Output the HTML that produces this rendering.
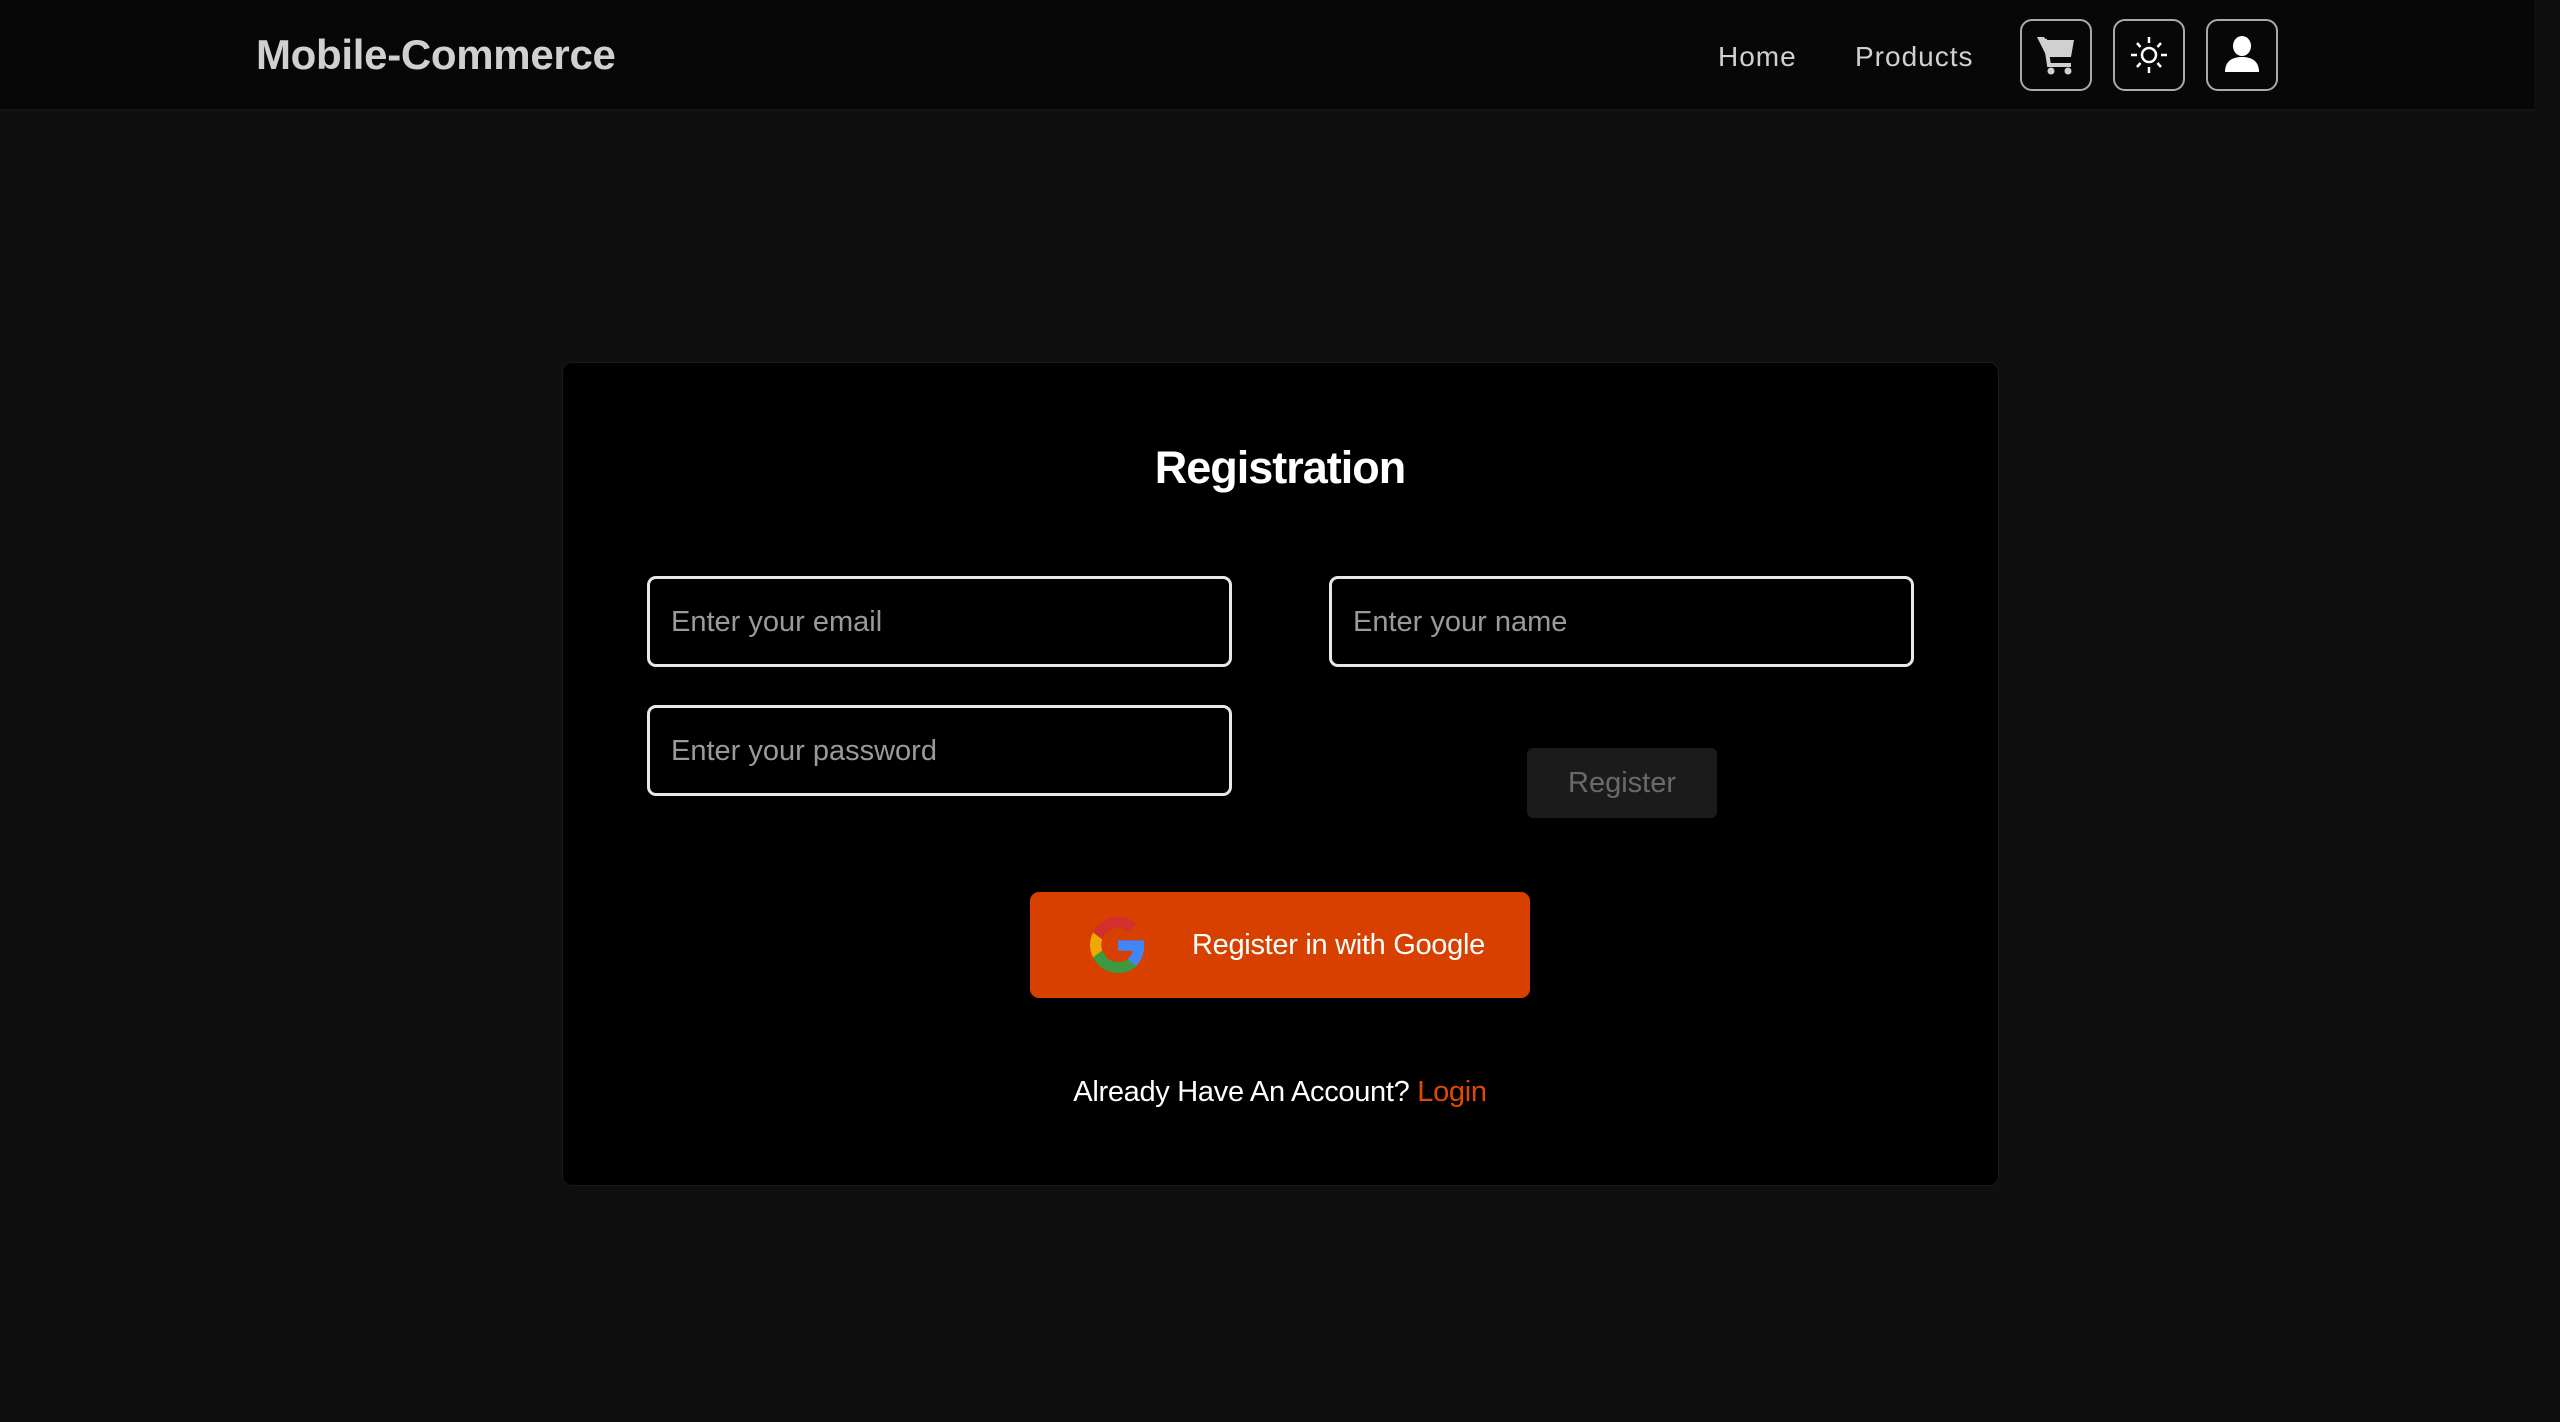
<!DOCTYPE html>
<html><head><style>
*{box-sizing:border-box;margin:0;padding:0}
body{width:2560px;height:1422px;background:#0f0f0f;font-family:"Liberation Sans",sans-serif;position:relative;overflow:hidden}
.nav{position:absolute;left:0;top:0;width:2534px;height:111px;background:#070707;border-bottom:2px solid #151515}
.logo{position:absolute;left:256px;top:31px;font-size:42px;font-weight:bold;color:#d0d0d0;letter-spacing:-0.3px}
.nl{position:absolute;top:41px;font-size:28px;color:#d0d0d0;letter-spacing:1px}
.ib{position:absolute;top:19px;width:72px;height:72px;border:2px solid #aaa;border-radius:12px;display:flex;align-items:center;justify-content:center}
.card{position:absolute;left:562px;top:362px;width:1437px;height:824px;background:#000;border:1px solid #1a1a1a;border-radius:10px}
.title{position:absolute;left:0;width:100%;top:442px;text-align:center;color:#fff;font-size:45px;font-weight:bold;letter-spacing:-1px}
.in{position:absolute;width:585px;height:91px;border:3px solid #e8e8e8;border-radius:9px;color:#9a9a9a;font-size:29px;padding-left:21px;line-height:87px}
.reg{position:absolute;left:1527px;top:748px;width:190px;height:70px;background:#1b1b1b;border-radius:6px;color:#6a6a6a;font-size:29px;text-align:center;line-height:71px}
.gb{position:absolute;left:1030px;top:892px;width:500px;height:106px;background:#d84000;border-radius:9px}
.gb span{position:absolute;left:162px;top:37px;color:#fff;font-size:29px;letter-spacing:-0.3px}
.al{position:absolute;left:0;width:2560px;top:1076px;text-align:center;color:#fff;font-size:29px;letter-spacing:-0.3px}
</style></head><body>
<div class="nav">
<div class="logo">Mobile-Commerce</div>
<div class="nl" style="left:1718px">Home</div>
<div class="nl" style="left:1855px">Products</div>
<div class="ib" style="left:2020px"><svg width="42" height="42" viewBox="0 0 42 42"><path d="M2 3h7l2 3h28l-3 17H12z" fill="#d0d0d0"/><path d="M10 5l4 26h22" stroke="#d0d0d0" stroke-width="4" fill="none"/><circle cx="16" cy="37" r="3.5" fill="#d0d0d0"/><circle cx="33" cy="37" r="3.5" fill="#d0d0d0"/></svg></div>
<div class="ib" style="left:2113px"><svg width="40" height="40" viewBox="0 0 40 40" stroke="#fff" stroke-width="2.5" fill="none"><circle cx="20" cy="20" r="7"/><path d="M20 2v6M20 32v6M2 20h6M32 20h6M8 8l3.5 4M32 8l-3.5 4M8 32l3.5-4M32 32l-3.5-4"/></svg></div>
<div class="ib" style="left:2206px"><svg width="40" height="40" viewBox="0 0 40 40" fill="#fff"><ellipse cx="20" cy="11" rx="9" ry="10"/><path d="M3 37c0-10 6-15 17-15s17 5 17 15z"/></svg></div>
</div>
<div class="card"></div>
<div class="title">Registration</div>
<div class="in" style="left:647px;top:576px">Enter your email</div>
<div class="in" style="left:1329px;top:576px">Enter your name</div>
<div class="in" style="left:647px;top:705px">Enter your password</div>
<div class="reg">Register</div>
<div class="gb"><svg style="position:absolute;left:60px;top:25px" width="56" height="56" viewBox="0 0 48 48"><path d="M24 9.5c3.5 0 6.6 1.2 9 3.5l6.7-6.7C35.6 2.4 30.2 0 24 0 14.6 0 6.6 5.4 2.7 13.3l7.8 6C12.4 13.7 17.7 9.5 24 9.5z" fill="#d32f2f"/><path d="M46.5 24.5c0-1.6-.2-3.1-.4-4.5H24v9h12.6c-.6 2.9-2.2 5.4-4.7 7.1l7.6 5.9c4.4-4.1 7-10.1 7-17.5z" fill="#4285f4"/><path d="M10.5 28.7c-.5-1.4-.8-3-.8-4.7s.3-3.2.8-4.7l-7.8-6C1 16.6 0 20.2 0 24s1 7.4 2.7 10.7z" fill="#f0a800"/><path d="M24 48c6.5 0 11.9-2.1 15.9-5.8l-7.6-5.9c-2.1 1.4-4.9 2.3-8.300 2.3-6.3 0-11.6-4.2-13.5-9.9l-7.8 6C6.6 42.6 14.6 48 24 48z" fill="#3d9a40"/></svg><span>Register in with Google</span></div>
<div class="al">Already Have An Account? <span style="color:#e04a00">Login</span></div>
</body></html>
